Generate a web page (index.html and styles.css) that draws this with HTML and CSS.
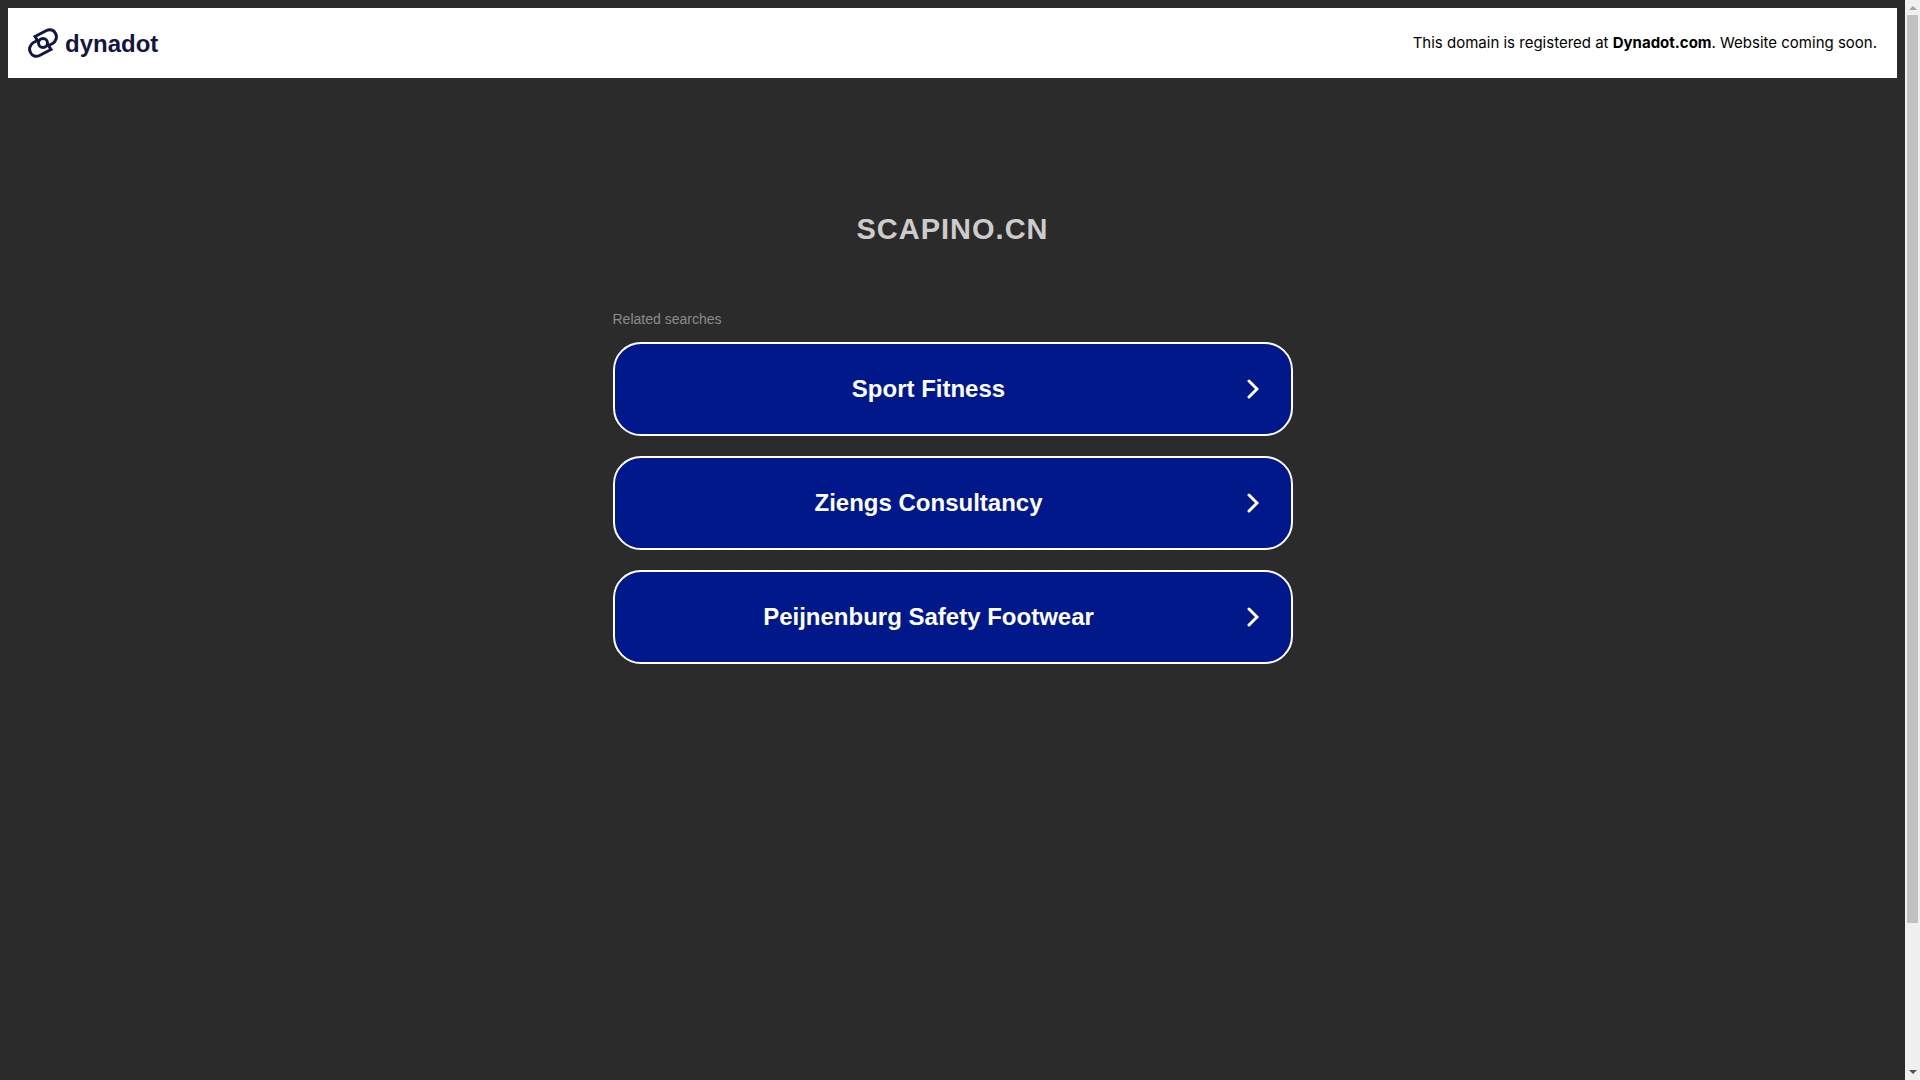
FILE: index.html
```html
<!DOCTYPE html>
<html lang="en">
<head>
    <meta charset="UTF-8">
    <meta name="viewport" content="width=device-width, initial-scale=1.0">
    <title>scapino.cn</title>
    <link rel="stylesheet" href="styles.css">
</head>
<body>
    <div class="page">
        <header class="banner">
            <a class="logo" href="#">
                <svg class="logo-mark" viewBox="0 0 30 30" fill="none" stroke="#131642" stroke-width="3">
                    <path d="M10.5 14 L7 8.5 L18.5 2.5 C22 .8 26 2 27.5 5.5 C29.5 9 28 13.500 24.500 15.500 L19.500 18"/>
                    <path d="M19.500 16 L23 21.500 L11.500 27.500 C8 29.200 4 28 2.500 24.500 C.5 21 2 16.500 5.500 14.500 L10.500 12"/>
                    <circle cx="15" cy="15" r="4.500"/>
                </svg>
                <span>dynadot</span>
            </a>
            <p class="notice">This domain is registered at <a href="#">Dynadot.com</a>. Website coming soon.</p>
        </header>
        <main class="content">
            <h1>SCAPINO.CN</h1>
            <p class="related">Related searches</p>
            <nav class="searches">
                <a class="search" href="#">
                    <span>Sport Fitness</span>
                    <svg class="chevron" viewBox="0 0 12 20"><path d="M2 2l8 8-8 8"/></svg>
                </a>
                <a class="search" href="#">
                    <span>Ziengs Consultancy</span>
                    <svg class="chevron" viewBox="0 0 12 20"><path d="M2 2l8 8-8 8"/></svg>
                </a>
                <a class="search" href="#">
                    <span>Peijnenburg Safety Footwear</span>
                    <svg class="chevron" viewBox="0 0 12 20"><path d="M2 2l8 8-8 8"/></svg>
                </a>
            </nav>
        </main>
    </div>
    <div class="scrollbar">
        <span class="arrow-up"></span>
        <div class="track"><div class="thumb"></div></div>
        <span class="arrow-down"></span>
    </div>
</body>
</html>
```
FILE: styles.css
```css
body {
    display: flex;
    min-height: 100vh;
    margin: 0;
    background-color: #2b2b2b;
    font-family: "Liberation Sans", Arial, sans-serif;
}
a {
    color: inherit;
    text-decoration: none;
}
.page {
    flex: 1;
    padding: 8px;
}
.banner {
    display: flex;
    justify-content: space-between;
    align-items: center;
    padding: 20px;
    background-color: white;
}
.logo {
    display: flex;
    align-items: center;
    gap: 7px;
    height: 30px;
    color: #131642;
    font-size: 24px;
    font-weight: bold;
    line-height: 30px;
}
.logo span {
    padding-top: 2px;
}
.logo-mark {
    width: 30px;
    height: 30px;
}
.notice {
    margin: 0;
    color: black;
    font-family: Inter, sans-serif;
    font-size: 15px;
    line-height: 30px;
}
.notice a {
    font-weight: bold;
}
.content {
    max-width: 680px;
    margin: 0 auto;
}
h1 {
    margin: 132px 0 63px;
    color: #ccc;
    font-size: 29px;
    line-height: 38px;
    letter-spacing: 1px;
    text-align: center;
}
.related {
    margin: 0 0 15px;
    color: #8c8c8c;
    font-size: 14px;
    line-height: 16px;
}
.searches {
    display: flex;
    flex-direction: column;
    gap: 20px;
}
.search {
    display: flex;
    align-items: center;
    padding: 30px 32px;
    border: 2px solid white;
    border-radius: 28px;
    background-color: #00188a;
    color: white;
    font-size: 24px;
    font-weight: bold;
    line-height: 30px;
}
.search span {
    flex: 1;
    padding-right: 36px;
    text-align: center;
}
.chevron {
    width: 12px;
    height: 20px;
    fill: none;
    stroke: white;
    stroke-width: 3;
    stroke-linecap: round;
}
.scrollbar {
    display: flex;
    flex-direction: column;
    align-items: center;
    justify-content: space-between;
    width: 15px;
    background-color: #f0f0f0;
}
.track {
    flex: 1;
    width: 11px;
    margin: 5px 0;
}
.thumb {
    height: 86.5%;
    background-color: #c1c1c1;
}
.arrow-up, .arrow-down {
    border-left: 4px solid transparent;
    border-right: 4px solid transparent;
}
.arrow-up {
    margin-top: 6px;
    border-bottom: 4px solid #a3a3a3;
}
.arrow-down {
    margin-bottom: 6px;
    border-top: 4px solid #505050;
}
```
